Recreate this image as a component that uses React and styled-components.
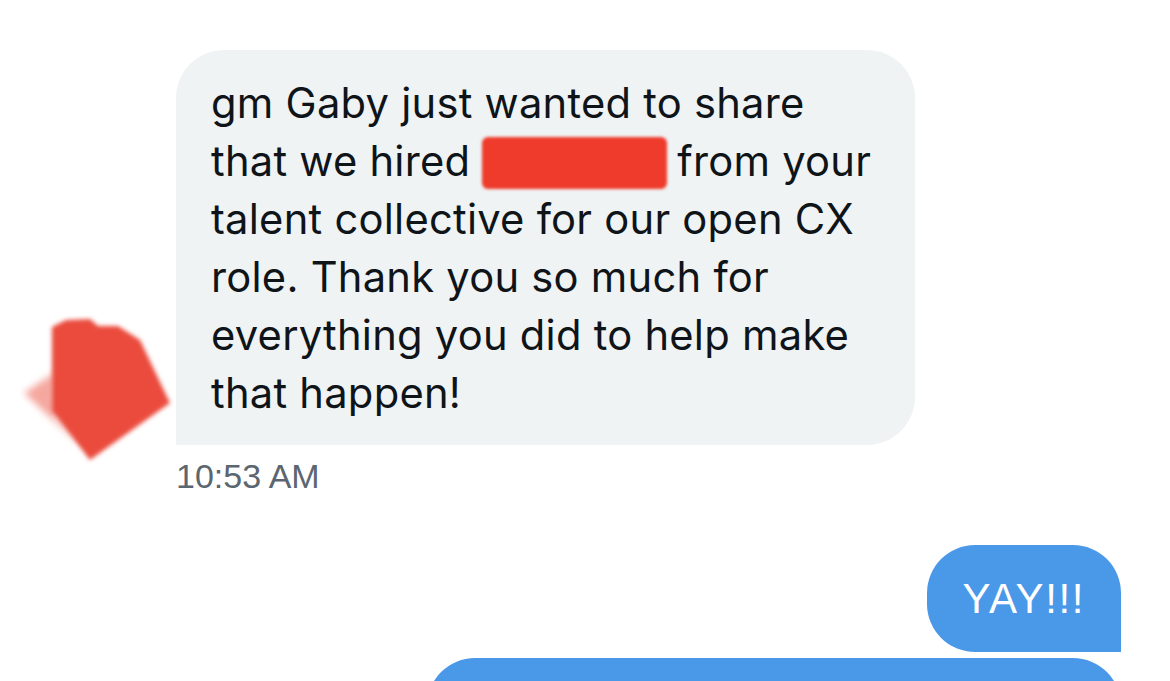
import React from 'react';
import styled, { createGlobalStyle } from 'styled-components';

const GlobalStyle = createGlobalStyle`
  html, body {
    margin: 0;
    padding: 0;
    background: #ffffff;
    overflow: hidden;
  }
  body {
    font-family: Inter, "Liberation Sans", sans-serif;
  }
`;

const Page = styled.div`
  width: 1170px;
  height: 681px;
  padding-top: 50px;
  box-sizing: border-box;
  display: flex;
  flex-direction: column;
`;

const IncomingRow = styled.div`
  display: flex;
  align-items: flex-end;
`;

const AvatarSlot = styled.div`
  width: 176px;
  flex-shrink: 0;
  display: flex;
  padding-left: 20px;
  box-sizing: border-box;
  margin-bottom: 30px;
`;

const MessageColumn = styled.div`
  display: flex;
  flex-direction: column;
`;

const Bubble = styled.div`
  background: ${p => (p.$outgoing ? '#4a98e8' : '#eff3f4')};
  color: ${p => (p.$outgoing ? '#ffffff' : '#0f1419')};
  border-radius: ${p => (p.$outgoing ? '48px 48px 0 48px' : '48px 48px 48px 0')};
  box-sizing: border-box;
`;

const IncomingBubble = styled(Bubble)`
  width: 739px;
  padding: 24px 36px 23px 35px;
  font-size: 41.7px;
  line-height: 58px;
  letter-spacing: 0.25px;
`;

const Redacted = styled.span`
  display: inline-block;
  width: 185px;
  height: 52px;
  margin-right: -2px;
  vertical-align: -13px;
  background: #ee3b2b;
  border-radius: 6px;
  filter: blur(1.4px);
`;

const Timestamp = styled.div`
  margin-top: 12px;
  font-family: "Liberation Sans", Arial, sans-serif;
  font-size: 34px;
  line-height: 38px;
  color: #5b6670;
`;

const OutgoingGroup = styled.div`
  margin-top: 50px;
  padding-right: 49px;
  display: flex;
  flex-direction: column;
  align-items: flex-end;
  gap: 6px;
`;

const ShortBubble = styled(Bubble)`
  padding: 30px 36px 29px;
  font-family: "Liberation Sans", Arial, sans-serif;
  font-size: 42px;
  line-height: 48px;
  letter-spacing: 1.6px;
`;

const LongBubble = styled(Bubble)`
  width: 694px;
  height: 120px;
`;

const Avatar = () => (
  <svg width="156" height="150" viewBox="0 0 156 150">
    <defs>
      <filter id="smear" x="-20%" y="-20%" width="140%" height="140%">
        <feGaussianBlur stdDeviation="2" />
      </filter>
      <filter id="soft" x="-30%" y="-30%" width="160%" height="160%">
        <feGaussianBlur stdDeviation="3.5" />
      </filter>
    </defs>
    <polygon points="4,78 34,58 36,102 62,132" fill="#f28a7f" opacity="0.75" filter="url(#soft)" />
    <polygon
      points="32,12 46,5 70,4 78,11 98,11 120,25 150,88 70,145 32,96"
      fill="#ea4c3e"
      filter="url(#smear)"
    />
  </svg>
);

export default function App() {
  return (
    <>
      <GlobalStyle />
      <Page>
        <IncomingRow>
          <AvatarSlot>
            <Avatar />
          </AvatarSlot>
          <MessageColumn>
            <IncomingBubble>
              gm Gaby just wanted to share that we hired <Redacted /> from your talent collective for our
              open CX role. Thank you so much for everything you did to help make that happen!
            </IncomingBubble>
            <Timestamp>10:53 AM</Timestamp>
          </MessageColumn>
        </IncomingRow>
        <OutgoingGroup>
          <ShortBubble $outgoing>YAY!!!</ShortBubble>
          <LongBubble $outgoing />
        </OutgoingGroup>
      </Page>
    </>
  );
}
